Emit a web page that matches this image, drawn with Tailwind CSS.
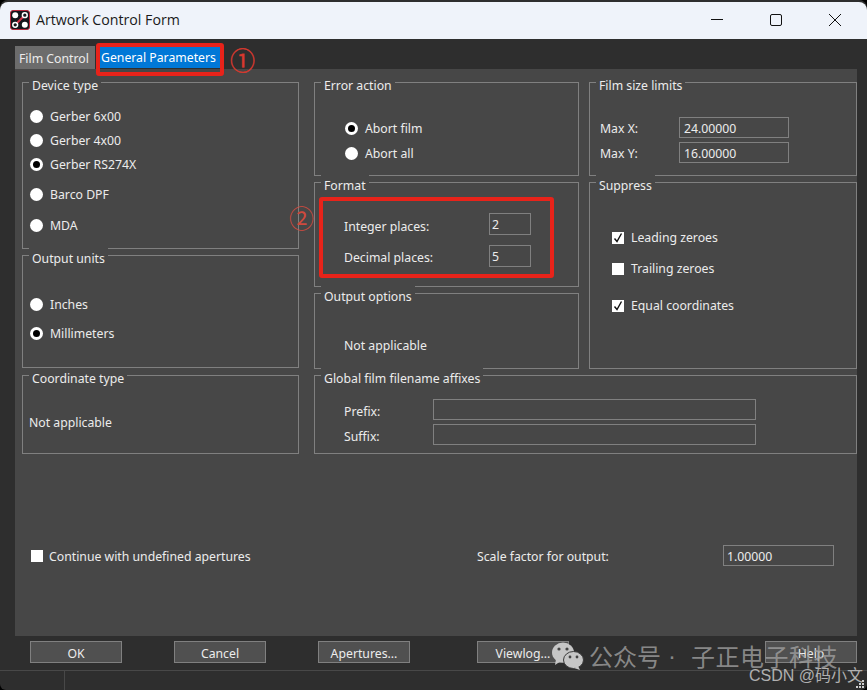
<!DOCTYPE html>
<html lang="en">
<head>
    <meta charset="UTF-8">
    <title>Artwork Control Form</title>
    <script src="https://cdn.jsdelivr.net/npm/@tailwindcss/browser@4"></script>
</head>
<body class="bg-black">
<div class="relative w-[867px] h-[690px] overflow-hidden bg-[#2e2e2e] rounded-t-[8px] rounded-b-[6px] text-[#ececec] text-[12.25px] leading-[22px] font-['Noto_Sans','Liberation_Sans',sans-serif]">

    <!-- title bar -->
    <header class="flex items-center h-[37px] mt-[2px] bg-[#eff3fa] text-[#1a1a1a] rounded-t-[8px]">
        <svg class="ml-[10px] -mt-[2px] w-[20px] h-[20px]" viewBox="0 0 20 20">
            <rect x="0.5" y="0.5" width="19" height="19" rx="2.5" fill="#15151c" stroke="#b5283c"/>
            <path d="M5 15 L15 5" stroke="#d8324a" stroke-width="2"/>
            <circle cx="5.2" cy="5.2" r="3" fill="#fff"/>
            <circle cx="14.8" cy="5.2" r="2.4" fill="#15151c" stroke="#fff" stroke-width="1.5"/>
            <circle cx="5.2" cy="14.8" r="2.4" fill="#15151c" stroke="#fff" stroke-width="1.5"/>
            <circle cx="14.8" cy="14.8" r="3" fill="#fff"/>
        </svg>
        <span class="ml-[6px] -mt-[2px] text-[14.2px] font-['Open_Sans',sans-serif]">Artwork Control Form</span>
        <div class="ml-auto flex items-center -mt-[2px]">
            <svg class="w-[14px] h-[14px] mr-[45px]" viewBox="0 0 14 14"><path d="M1 6.5H13" stroke="#111" stroke-width="1"/></svg>
            <svg class="w-[14px] h-[14px] mr-[45px]" viewBox="0 0 14 14"><rect x="1.5" y="1.5" width="11" height="11" rx="1.5" fill="none" stroke="#111" stroke-width="1"/></svg>
            <svg class="w-[14px] h-[14px] mr-[25px]" viewBox="0 0 14 14"><path d="M1 1L13 13M13 1L1 13" stroke="#111" stroke-width="1"/></svg>
        </div>
    </header>

    <!-- tabs -->
    <nav class="flex items-end h-[30px] pl-[15px]">
        <div class="w-[80px] h-[23px] bg-[#6c6c6c] pl-[4px] leading-[25px]">Film Control</div>
        <div class="ml-[5px] mb-[1px] w-[120px] h-[22px] bg-[#0078d7] pl-[1px] text-white leading-[23px]">General Parameters</div>
    </nav>

    <!-- panel -->
    <main class="ml-[15px] w-[842px] h-[567px] bg-[#474747] pl-[7px] pt-[13px]">
        <div class="flex">
            <div class="w-[277px] flex flex-col">
                <section class="relative h-[167px] border border-[#808080] pl-[7px] pt-[23px]">
                    <span class="absolute left-[6px] -top-[8px] px-[3px] bg-[#474747]">Device type</span>
                    <div class="flex items-center h-[20px]"><span class="w-[13px] h-[13px] rounded-full bg-white"></span><span class="ml-[7px] mt-[2px]">Gerber 6x00</span></div>
                    <div class="flex items-center h-[20px] mt-[4px]"><span class="w-[13px] h-[13px] rounded-full bg-white"></span><span class="ml-[7px] mt-[2px]">Gerber 4x00</span></div>
                    <div class="flex items-center h-[20px] mt-[4px]"><span class="flex items-center justify-center w-[13px] h-[13px] rounded-full bg-white"><span class="w-[7px] h-[7px] rounded-full bg-black"></span></span><span class="ml-[7px] mt-[2px]">Gerber RS274X</span></div>
                    <div class="flex items-center h-[20px] mt-[10px]"><span class="w-[13px] h-[13px] rounded-full bg-white"></span><span class="ml-[7px] mt-[2px]">Barco DPF</span></div>
                    <div class="flex items-center h-[20px] mt-[11px]"><span class="w-[13px] h-[13px] rounded-full bg-white"></span><span class="ml-[7px] mt-[2px]">MDA</span></div>
                </section>
                <section class="relative h-[113px] mt-[6px] border border-[#808080] pl-[7px] pt-[38px]">
                    <span class="absolute left-[6px] -top-[8px] px-[3px] bg-[#474747]">Output units</span>
                    <div class="flex items-center h-[20px]"><span class="w-[13px] h-[13px] rounded-full bg-white"></span><span class="ml-[7px] mt-[2px]">Inches</span></div>
                    <div class="flex items-center h-[20px] mt-[9px]"><span class="flex items-center justify-center w-[13px] h-[13px] rounded-full bg-white"><span class="w-[7px] h-[7px] rounded-full bg-black"></span></span><span class="ml-[7px] mt-[2px]">Millimeters</span></div>
                </section>
                <section class="relative h-[79px] mt-[7px] border border-[#808080] pl-[6px] pt-[36px]">
                    <span class="absolute left-[6px] -top-[8px] px-[3px] bg-[#474747]">Coordinate type</span>
                    <div>Not applicable</div>
                </section>
            </div>

            <div class="ml-[15px] w-[543px]">
                <div class="flex">
                    <div class="w-[265px] flex flex-col">
                        <section class="relative h-[94px] border border-[#808080] pl-[30px] pt-[35px]">
                            <span class="absolute left-[6px] -top-[8px] px-[3px] bg-[#474747]">Error action</span>
                            <div class="flex items-center h-[20px]"><span class="flex items-center justify-center w-[13px] h-[13px] rounded-full bg-white"><span class="w-[7px] h-[7px] rounded-full bg-black"></span></span><span class="ml-[7px] mt-[2px]">Abort film</span></div>
                            <div class="flex items-center h-[20px] mt-[5px]"><span class="w-[13px] h-[13px] rounded-full bg-white"></span><span class="ml-[7px] mt-[2px]">Abort all</span></div>
                        </section>
                        <section class="relative h-[105px] mt-[6px] border border-[#808080] pl-[29px] pt-[30px]">
                            <span class="absolute left-[6px] -top-[8px] px-[3px] bg-[#474747]">Format</span>
                            <div class="flex items-center h-[22px]"><span class="w-[145px] mt-[6px]">Integer places:</span><input value="2" class="w-[42px] h-[22px] border border-[#808080] pl-[2px] pt-[2px] outline-none"></div>
                            <div class="flex items-center h-[22px] mt-[10px]"><span class="w-[145px] mt-[4px]">Decimal places:</span><input value="5" class="w-[42px] h-[22px] border border-[#808080] pl-[2px] pt-[2px] outline-none"></div>
                        </section>
                        <section class="relative h-[76px] mt-[6px] border border-[#808080] pl-[29px] pt-[41px]">
                            <span class="absolute left-[6px] -top-[8px] px-[3px] bg-[#474747]">Output options</span>
                            <div>Not applicable</div>
                        </section>
                    </div>
                    <div class="ml-[10px] w-[268px] flex flex-col">
                        <section class="relative h-[94px] border border-[#808080] pl-[10px] pt-[34px]">
                            <span class="absolute left-[6px] -top-[8px] px-[3px] bg-[#474747]">Film size limits</span>
                            <div class="flex items-center h-[21px]"><span class="w-[79px] mt-[2px]">Max X:</span><input value="24.00000" class="w-[110px] h-[21px] border border-[#808080] pl-[4px] pt-[2px] outline-none"></div>
                            <div class="flex items-center h-[21px] mt-[4px]"><span class="w-[79px] mt-[2px]">Max Y:</span><input value="16.00000" class="w-[110px] h-[21px] border border-[#808080] pl-[4px] pt-[2px] outline-none"></div>
                        </section>
                        <section class="relative h-[187px] mt-[6px] border border-[#808080] pl-[22px] pt-[45px]">
                            <span class="absolute left-[6px] -top-[8px] px-[3px] bg-[#474747]">Suppress</span>
                            <div class="flex items-center h-[20px]">
                                <svg class="w-[12px] h-[12px] bg-white" viewBox="0 0 12 12"><path d="M2.5 6.5L5 9.5L9.5 1.5" fill="none" stroke="#111" stroke-width="1.4"/></svg>
                                <span class="ml-[7px]">Leading zeroes</span>
                            </div>
                            <div class="flex items-center h-[20px] mt-[11px]">
                                <span class="w-[12px] h-[12px] bg-white"></span>
                                <span class="ml-[7px]">Trailing zeroes</span>
                            </div>
                            <div class="flex items-center h-[20px] mt-[17px]">
                                <svg class="w-[12px] h-[12px] bg-white" viewBox="0 0 12 12"><path d="M2.5 6.5L5 9.5L9.5 1.5" fill="none" stroke="#111" stroke-width="1.4"/></svg>
                                <span class="ml-[7px]">Equal coordinates</span>
                            </div>
                        </section>
                    </div>
                </div>
                <section class="relative h-[79px] mt-[6px] border border-[#808080] pl-[29px] pt-[23px]">
                    <span class="absolute left-[6px] -top-[8px] px-[3px] bg-[#474747]">Global film filename affixes</span>
                    <div class="flex items-center h-[21px]"><span class="w-[89px] mt-[4px]">Prefix:</span><input class="w-[323px] h-[21px] border border-[#808080] outline-none"></div>
                    <div class="flex items-center h-[21px] mt-[4px]"><span class="w-[89px] mt-[4px]">Suffix:</span><input class="w-[323px] h-[21px] border border-[#808080] outline-none"></div>
                </section>
            </div>
        </div>

        <div class="flex items-center h-[21px] mt-[91px]">
            <span class="ml-[9px] w-[12px] h-[12px] bg-white"></span>
            <span class="ml-[6px] w-[428px] mt-[2px]">Continue with undefined apertures</span>
            <span class="w-[246px] mt-[2px]">Scale factor for output:</span>
            <input value="1.00000" class="w-[111px] h-[21px] border border-[#808080] pl-[3px] pt-[2px] outline-none">
        </div>
    </main>

    <!-- buttons -->
    <footer class="flex h-[22px] mt-[5px] pl-[30px]">
        <button class="w-[92px] h-[22px] pt-[3px] leading-[18px] bg-[#505050] border border-[#808080]">OK</button>
        <button class="ml-[52px] w-[92px] h-[22px] pt-[3px] leading-[18px] bg-[#505050] border border-[#808080]">Cancel</button>
        <button class="ml-[52px] w-[92px] h-[22px] pt-[3px] leading-[18px] bg-[#505050] border border-[#808080]">Apertures...</button>
        <button class="ml-[67px] w-[92px] h-[22px] pt-[3px] leading-[18px] bg-[#505050] border border-[#808080]">Viewlog...</button>
        <button class="ml-[196px] w-[92px] h-[22px] pt-[3px] leading-[18px] bg-[#505050] border border-[#808080]">Help</button>
    </footer>

    <!-- status bar -->
    <div class="mt-[7px] h-[20px] border-t border-[#484848] flex">
        <div class="w-[65px] border-r border-[#484848]"></div>
    </div>

    <!-- red annotations -->
    <div class="absolute left-[96px] top-[43px] w-[128px] h-[33px] border-[4px] border-[#e8231a] rounded-[3px]"></div>
    <span class="absolute left-[230px] top-[44px] text-[25px] leading-[30px] text-[#d8392e] [-webkit-text-stroke:0.4px_#d8392e] font-['Noto_Sans_CJK_SC',sans-serif]">①</span>
    <div class="absolute left-[319px] top-[197px] w-[235px] h-[81px] border-[4px] border-[#e8231a] rounded-[3px]"></div>
    <span class="absolute left-[289px] top-[202px] text-[25px] leading-[30px] text-[#cf4a3e] font-['Noto_Sans_CJK_SC',sans-serif]">②</span>

    <!-- watermark -->
    <svg class="absolute left-[551px] top-[641px] w-[33px] h-[29px]" viewBox="0 0 33 29">
        <ellipse cx="12" cy="11.5" rx="11" ry="10" fill="#c6c6c6"/>
        <path d="M5 18L4 24L10 20Z" fill="#c6c6c6"/>
        <ellipse cx="22.5" cy="19" rx="10" ry="8.5" fill="#c6c6c6" stroke="#3a3a3a" stroke-width="1"/>
        <path d="M27 25L29 29L23 27Z" fill="#c6c6c6"/>
        <circle cx="8" cy="8" r="1.6" fill="#444"/><circle cx="16" cy="8" r="1.6" fill="#444"/>
        <circle cx="19" cy="16" r="1.4" fill="#444"/><circle cx="26" cy="16" r="1.4" fill="#444"/>
    </svg>
    <span class="absolute left-[589px] top-[639px] text-[24px] leading-[34px] whitespace-nowrap text-[#a0a0a0]/80 font-['Noto_Sans_CJK_SC',sans-serif]">公众号</span>
    <span class="absolute left-[668px] top-[639px] text-[24px] leading-[34px] text-[#a0a0a0]/80 font-['Liberation_Sans',sans-serif]">·</span>
    <span class="absolute left-[691px] top-[639px] text-[24px] leading-[34px] tracking-[0.5px] whitespace-nowrap text-[#a0a0a0]/80 font-['Noto_Sans_CJK_SC',sans-serif]">子正电子科技</span>
    <span class="absolute left-[749px] top-[665px] text-[16px] leading-[22px] whitespace-nowrap text-[#b0b0b0] font-['Liberation_Sans','Noto_Sans_CJK_SC',sans-serif]">CSDN @码小文</span>

    <!-- resize grip -->
    <svg class="absolute right-[2px] bottom-[1px] w-[10px] h-[10px]" viewBox="0 0 10 10" fill="#cfcfcf">
        <rect x="7" y="1" width="2" height="2"/><rect x="4" y="4" width="2" height="2"/><rect x="7" y="4" width="2" height="2"/>
        <rect x="1" y="7" width="2" height="2"/><rect x="4" y="7" width="2" height="2"/><rect x="7" y="7" width="2" height="2"/>
    </svg>
</div>
</body>
</html>
